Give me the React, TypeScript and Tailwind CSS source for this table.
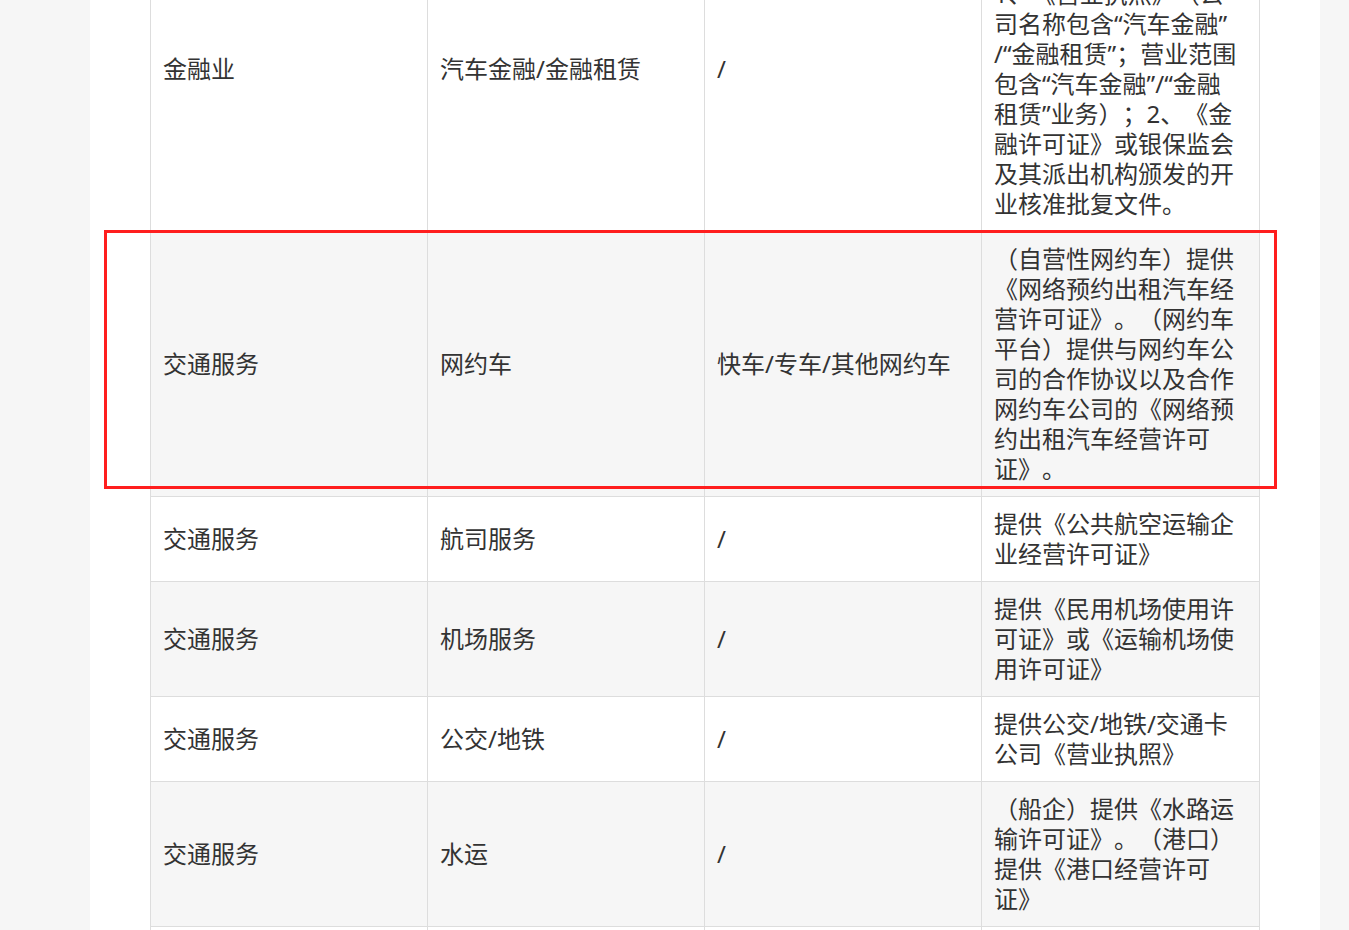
const rows = [
  {
    industry: '金融业',
    category: '汽车金融/金融租赁',
    sub: '/',
    docs: [
      '（汽车金融/金融租赁',
      '公司）需提供以下资质：',
      '1、《营业执照》（公',
      '司名称包含“汽车金融”',
      '/“金融租赁”；营业范围',
      '包含“汽车金融”/“金融',
      '租赁”业务）；2、《金',
      '融许可证》或银保监会',
      '及其派出机构颁发的开',
      '业核准批复文件。',
    ],
  },
  {
    industry: '交通服务',
    category: '网约车',
    sub: '快车/专车/其他网约车',
    docs: [
      '（自营性网约车）提供',
      '《网络预约出租汽车经',
      '营许可证》。（网约车',
      '平台）提供与网约车公',
      '司的合作协议以及合作',
      '网约车公司的《网络预',
      '约出租汽车经营许可',
      '证》。',
    ],
  },
  {
    industry: '交通服务',
    category: '航司服务',
    sub: '/',
    docs: ['提供《公共航空运输企', '业经营许可证》'],
  },
  {
    industry: '交通服务',
    category: '机场服务',
    sub: '/',
    docs: ['提供《民用机场使用许', '可证》或《运输机场使', '用许可证》'],
  },
  {
    industry: '交通服务',
    category: '公交/地铁',
    sub: '/',
    docs: ['提供公交/地铁/交通卡', '公司《营业执照》'],
  },
  {
    industry: '交通服务',
    category: '水运',
    sub: '/',
    docs: ['（船企）提供《水路运', '输许可证》。（港口）', '提供《港口经营许可', '证》'],
  },
  {
    industry: '交通服务',
    category: '旅游服务',
    sub: '/',
    docs: ['提供《营业执照》'],
  },
]

export default function App() {
  return (
    <div className="h-[930px] bg-[#f6f6f6] overflow-hidden">
      <div className="ml-[90px] w-[1230px] h-full bg-white pl-[60px] flex flex-col">
        <div className="relative -mt-[94px] w-[1109px]">
          <table
            className="w-[1109px] table-fixed border-collapse text-[24px] leading-[30px] text-[#333] [text-spacing-trim:space-all]"
            style={{ fontFamily: '"Noto Sans", "Noto Sans CJK SC", sans-serif' }}
          >
            <colgroup>
              <col className="w-[277px]" />
              <col className="w-[277px]" />
              <col className="w-[277px]" />
              <col className="w-[278px]" />
            </colgroup>
            <tbody>
              {rows.map((r, i) => (
                <tr key={i} className={i % 2 === 1 ? 'bg-[#f6f6f6]' : 'bg-white'}>
                  <td className="border border-[#dddddd] px-3 py-3 align-middle">{r.industry}</td>
                  <td className="border border-[#dddddd] px-3 py-3 align-middle">{r.category}</td>
                  <td className="border border-[#dddddd] px-3 py-3 align-middle">{r.sub}</td>
                  <td className="border border-[#dddddd] px-3 py-3 align-middle">
                    {r.docs.map((line, j) => (
                      <span key={j} className="block whitespace-nowrap">{line}</span>
                    ))}
                  </td>
                </tr>
              ))}
            </tbody>
          </table>
          {/* highlight box */}
          <div className="absolute left-[-46px] top-[324px] w-[1173px] h-[259px] border-[3px] border-[#ff1e1e] pointer-events-none" />
        </div>
      </div>
    </div>
  )
}
